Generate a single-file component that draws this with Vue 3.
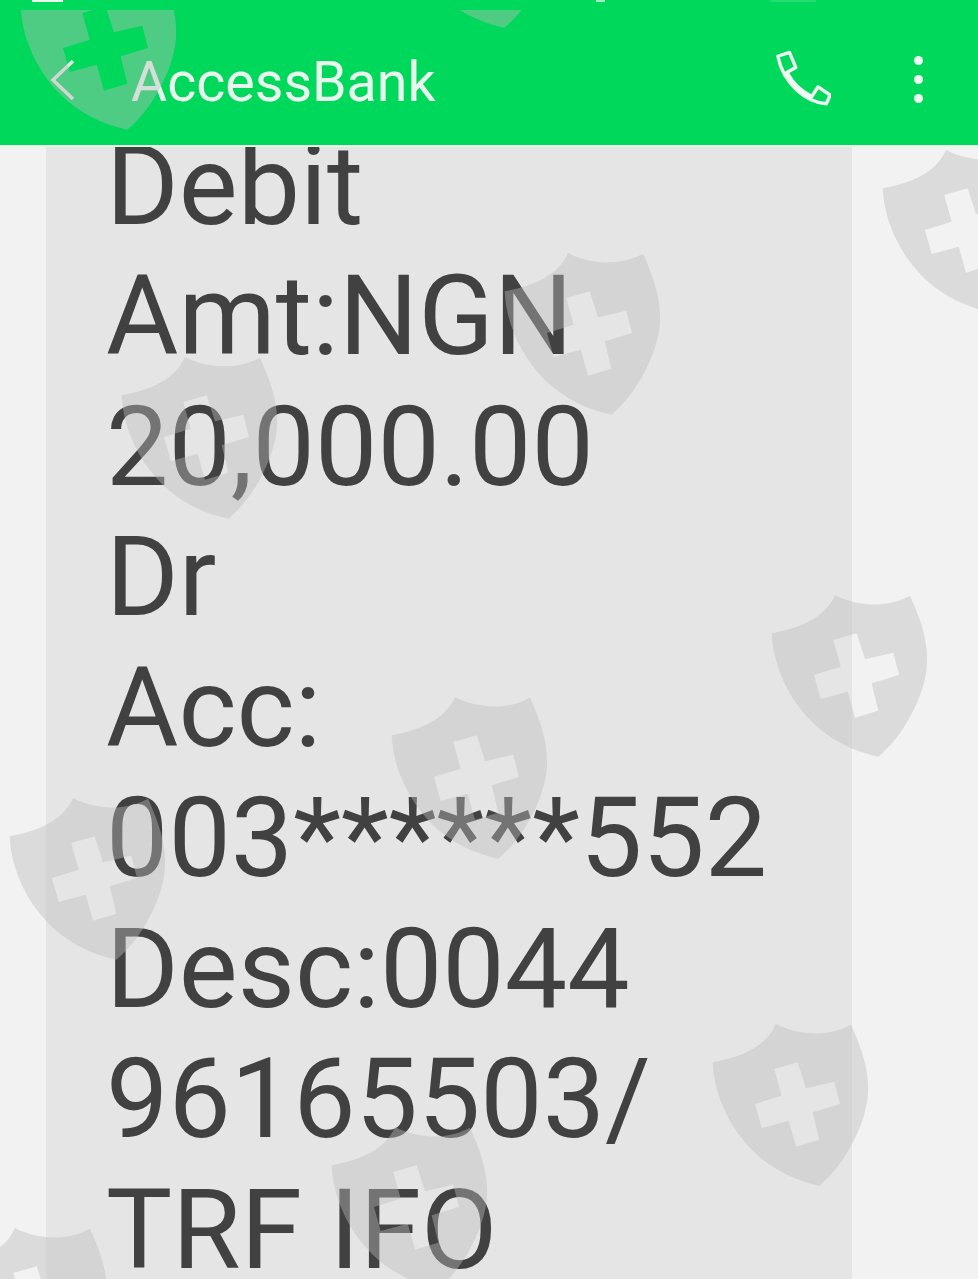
<template>
  <div class="screen">
    <div class="status">
      <span class="status-a"></span>
      <span class="status-b"></span>
      <span class="status-c"></span>
    </div>
    <header class="bar">
      <svg class="back" width="40" height="60" viewBox="0 0 40 60">
        <path d="M27 11 L7 30 L27 49" fill="none" stroke="#dfeae3" stroke-width="3.5" />
      </svg>
      <span class="title">AccessBank</span>
      <svg class="phone" width="60" height="60" viewBox="0 0 60 60">
        <path
          d="M6 8.500 L18 4.500 L24.500 20 L15.500 25 C21 36 29 44 41 50 L47.500 40 L60 48.500 L56 57.500 C36 56 12 38 6 8.500 Z"
          fill="none"
          stroke="#eefaf2"
          stroke-width="3.500"
          stroke-linejoin="round"
          transform="translate(1 0) scale(0.97)"
        />
      </svg>
      <div class="dots">
        <i></i>
        <i></i>
        <i></i>
      </div>
    </header>
    <main class="page">
      <div class="bubble">
        <div v-for="line in lines" :key="line" class="line">{{ line }}</div>
      </div>
    </main>
    <svg class="marks" width="978" height="1279" viewBox="0 0 978 1279">
      <defs>
        <clipPath id="below-status">
          <rect x="0" y="10" width="978" height="1269" />
        </clipPath>
      </defs>
      <g clip-path="url(#below-status)">
        <path
          v-for="(m, i) in marks"
          :key="i"
          :transform="`translate(${m[0]} ${m[1]})`"
          fill="rgba(188,188,188,0.42)"
          fill-rule="evenodd"
          d="M771.700 633.300 C800 628 825 618 835 595 C858 607 888 608 910 595.700 C922 622 929 645 926.700 668 C924 695 905 735 878.300 756.700 C855 752 830 740 812 722 C788 698 773 665 771.700 633.300 Z M833.300 640 L856.700 633.300 L865 659.300 L893.300 652.700 L899 675 L871.700 683.300 L878.300 710.700 L855 717.700 L847.700 691.700 L820.700 699 L814 675 L840.700 666.700 Z"
        />
      </g>
    </svg>
  </div>
</template>

<script setup>
const lines = [
  'Debit',
  'Amt:NGN',
  '20,000.00',
  'Dr',
  'Acc:',
  '003******552',
  'Desc:0044',
  '96165503/',
  'TRF IFO'
]

// watermark tile offsets, measured from the shield at the right of the Dr row
const marks = [
  [-751, -627],
  [-374, -729],
  [111, -445],
  [-267, -342],
  [-650, -238],
  [0, 0],
  [-380, 102],
  [-762, 203],
  [-59, 429],
  [-440, 532],
  [-820, 633]
]
</script>

<style scoped>
.screen {
  position: relative;
  width: 978px;
  height: 1279px;
  overflow: hidden;
  background: #f2f2f3;
  font-family: Roboto, 'Liberation Sans', sans-serif;
}

.status {
  position: relative;
  height: 3px;
  background: #00d85c;
}

.status span {
  position: absolute;
  top: 0;
  height: 2px;
  background: #eaf8ef;
}

.status-a {
  left: 32px;
  width: 31px;
}

.status-b {
  left: 596px;
  width: 9px;
  opacity: 0.7;
}

.status-c {
  left: 770px;
  width: 46px;
  opacity: 0.15;
}

.bar {
  position: relative;
  z-index: 1;
  display: flex;
  align-items: center;
  height: 142px;
  box-sizing: border-box;
  padding: 16px 0 0 46px;
  background: #00d85c;
  box-shadow: 0 2px 0 #e4f5eb;
}

.back {
  flex: none;
  margin-top: -4px;
}

.title {
  margin-left: 45px;
  font-size: 55.5px;
  color: #e8f6ee;
  white-space: nowrap;
}

.phone {
  flex: none;
  margin-left: auto;
  margin-top: -8px;
}

.dots {
  display: flex;
  flex-direction: column;
  gap: 10px;
  margin: -6px 55px 0 83px;
}

.dots i {
  display: block;
  width: 9px;
  height: 9px;
  border-radius: 50%;
  background: #eefaf2;
}

.page {
  margin-top: -24.5px;
}

.bubble {
  width: 806px;
  margin-left: 46px;
  padding-left: 60px;
  box-sizing: border-box;
  background: #e5e5e6;
  color: #414141;
  font-size: 111px;
  line-height: 130.500px;
  white-space: nowrap;
}

.marks {
  position: absolute;
  top: 0;
  left: 0;
  z-index: 2;
  pointer-events: none;
}
</style>
